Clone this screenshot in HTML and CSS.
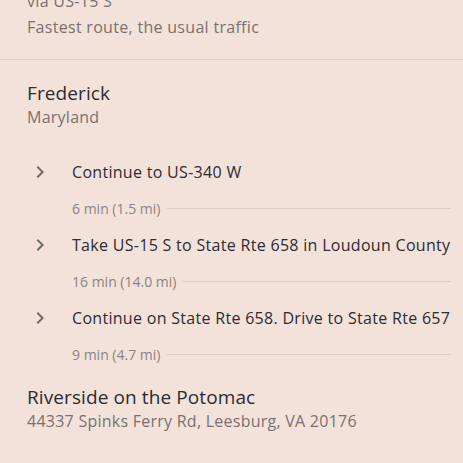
FILE: index.html
```html
<!DOCTYPE html>
<html lang="en">
<head>
    <meta charset="UTF-8">
    <meta name="viewport" content="width=device-width, initial-scale=1.0">
    <title>Directions</title>
    <link rel="stylesheet" href="styles.css">
</head>
<body>
    <div class="route">
        <div class="route-via">via US-15 S</div>
        <div class="route-note">Fastest route, the usual traffic</div>
    </div>

    <div class="place place-start">
        <div class="place-name">Frederick</div>
        <div class="place-sub">Maryland</div>
    </div>

    <div class="steps">
        <div class="step">
            <div class="step-row">
                <svg class="chev" viewBox="0 0 24 24"><path d="M8.6 16.6 13.2 12 8.6 7.4 10 6l6 6-6 6z"/></svg>
                <span class="step-text">Continue to US-340 W</span>
            </div>
            <div class="step-meta"><span>6 min (1.5 mi)</span><div class="rule"></div></div>
        </div>
        <div class="step">
            <div class="step-row">
                <svg class="chev" viewBox="0 0 24 24"><path d="M8.6 16.6 13.2 12 8.6 7.4 10 6l6 6-6 6z"/></svg>
                <span class="step-text">Take US-15 S to State Rte 658 in Loudoun County</span>
            </div>
            <div class="step-meta"><span>16 min (14.0 mi)</span><div class="rule"></div></div>
        </div>
        <div class="step">
            <div class="step-row">
                <svg class="chev" viewBox="0 0 24 24"><path d="M8.6 16.6 13.2 12 8.6 7.4 10 6l6 6-6 6z"/></svg>
                <span class="step-text">Continue on State Rte 658. Drive to State Rte 657</span>
            </div>
            <div class="step-meta"><span>9 min (4.7 mi)</span><div class="rule"></div></div>
        </div>
    </div>

    <div class="place place-end">
        <div class="place-name">Riverside on the Potomac</div>
        <div class="place-sub">44337 Spinks Ferry Rd, Leesburg, VA 20176</div>
    </div>
</body>
</html>
```

FILE: styles.css
```css
body {
    margin: 0;
    background-color: #f3e2d9;
    font-family: "Open Sans", Roboto, sans-serif;
    color: #2d2b33;
    overflow: hidden;
}

.route {
    margin-top: -11px;
    padding: 0 12px 20px 27px;
    border-bottom: 1px solid #dccdc5;
    color: #79716f;
    font-size: 16px;
    letter-spacing: 0.3px;
}

.route-via {
    line-height: 24px;
}

.route-note {
    line-height: 24px;
    margin-top: 2px;
}

.place {
    padding-left: 27px;
}

.place-start {
    padding-top: 21px;
}

.place-name {
    font-size: 19px;
    line-height: 24px;
    letter-spacing: 0.1px;
}

.place-sub {
    font-size: 16px;
    line-height: 24px;
    color: #79716f;
    letter-spacing: 0.25px;
}

.steps {
    padding: 28px 12px 0 0;
}

.step-row {
    display: flex;
    align-items: center;
    height: 30px;
}

.chev {
    width: 24px;
    height: 24px;
    margin-left: 28px;
    margin-right: 20px;
    fill: #6f6a6a;
}

.step-text {
    font-size: 16px;
    letter-spacing: 0.3px;
}

.step-meta {
    display: flex;
    align-items: center;
    gap: 7px;
    margin: 10px 0 11px 72px;
    height: 22px;
    font-size: 14px;
    color: #8a8381;
}

.rule {
    flex: 1;
    border-top: 1px solid #dccdc5;
}

.place-end {
    padding-top: 9px;
}
```
